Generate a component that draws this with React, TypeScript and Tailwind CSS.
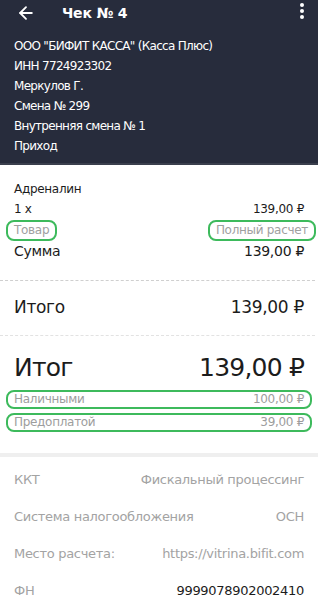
import { ArrowLeft } from "lucide-react";

const headerLines = [
    'ООО "БИФИТ КАССА" (Касса Плюс)',
    "ИНН 7724923302",
    "Меркулов Г.",
    "Смена № 299",
    "Внутренняя смена № 1",
    "Приход",
];

const infoRows = [
    { label: "ККТ", value: "Фискальный процессинг", dark: false },
    { label: "Система налогообложения", value: "ОСН", dark: false },
    { label: "Место расчета:", value: "https://vitrina.bifit.com", dark: false },
    { label: "ФН", value: "9999078902002410", dark: true },
];

function App() {
    return (
        <div
            className="w-[318px] h-[598px] overflow-hidden bg-white text-[#1c1c1c]"
            style={{ fontFamily: '"DejaVu Sans", "Open Sans", sans-serif' }}
        >
            {/* Header */}
            <div className="bg-[#272c3c] text-white pb-[7px] border-b-2 border-[#3a3f4d]">
                <div className="flex items-center h-[26px] pl-[16px] pr-[14px]">
                    <ArrowLeft size={20} strokeWidth={2.2} />
                    <div className="ml-[26px] font-bold text-[14px] tracking-[-0.2px]">Чек № 4</div>
                    <div className="ml-auto flex flex-col gap-[2px] items-center mt-[-4px]">
                        <span className="w-[4px] h-[4px] rounded-full bg-white" />
                        <span className="w-[4px] h-[4px] rounded-full bg-white" />
                        <span className="w-[4px] h-[4px] rounded-full bg-white" />
                    </div>
                </div>
                <div className="px-[14px] pt-[10px] text-[12px] leading-[20px] tracking-[-0.7px]">
                    {headerLines.map((l) => (
                        <div key={l}>{l}</div>
                    ))}
                </div>
            </div>

            {/* Item */}
            <div className="px-[14px] pt-[14px] tracking-[-0.3px]">
                <div className="text-[12px] leading-[20px]">Адреналин</div>
                <div className="flex justify-between text-[12px] leading-[20px]">
                    <span>1 x</span>
                    <span>139,00 ₽</span>
                </div>
                <div className="flex justify-between items-center text-[12px] text-[#a0a0a0] h-[22px]">
                    <span className="-ml-[8px] px-[6px] border-2 border-[#3dba5c] rounded-[8px] leading-[17px]">Товар</span>
                    <span className="-mr-[12px] px-[6px] border-2 border-[#3dba5c] rounded-[8px] leading-[17px]">Полный расчет</span>
                </div>
                <div className="flex justify-between text-[14px] leading-[20px]">
                    <span>Сумма</span>
                    <span>139,00 ₽</span>
                </div>
            </div>

            <div className="mt-[19px] mr-[3px] border-t border-dashed border-[#cfcfcf]" />

            <div className="flex justify-between items-center px-[14px] h-[54px] text-[17px] tracking-[-0.3px]">
                <span>Итого</span>
                <span>139,00 ₽</span>
            </div>

            <div className="mr-[3px] border-t border-dashed border-[#e2e2e2]" />

            {/* Total */}
            <div className="px-[14px] pt-[14px] tracking-[-0.8px]">
                <div className="flex justify-between items-center text-[25px] leading-[36px]">
                    <span>Итог</span>
                    <span>139,00 ₽</span>
                </div>
                <div className="flex flex-col gap-[4px] mt-[4px] -mx-[8px] text-[12px] text-[#9d9d9d] tracking-[-0.3px]">
                    <div className="flex justify-between px-[6px] border-2 border-[#3dba5c] rounded-[8px] leading-[15px]">
                        <span>Наличными</span>
                        <span>100,00 ₽</span>
                    </div>
                    <div className="flex justify-between px-[6px] border-2 border-[#3dba5c] rounded-[8px] leading-[15px]">
                        <span>Предоплатой</span>
                        <span>39,00 ₽</span>
                    </div>
                </div>
            </div>

            <div className="mt-[21px] h-[4px] bg-[#efefef]" />

            {/* Info */}
            <div className="px-[14px] pt-[4px] text-[13px] tracking-[-0.3px]">
                {infoRows.map((r) => (
                    <div key={r.label} className="flex justify-between items-center h-[37px]">
                        <span className="text-[#a3a3a3]">{r.label}</span>
                        <span className={r.dark ? "text-[#1c1c1c]" : "text-[#a3a3a3]"}>{r.value}</span>
                    </div>
                ))}
            </div>
        </div>
    );
}

export default App;
